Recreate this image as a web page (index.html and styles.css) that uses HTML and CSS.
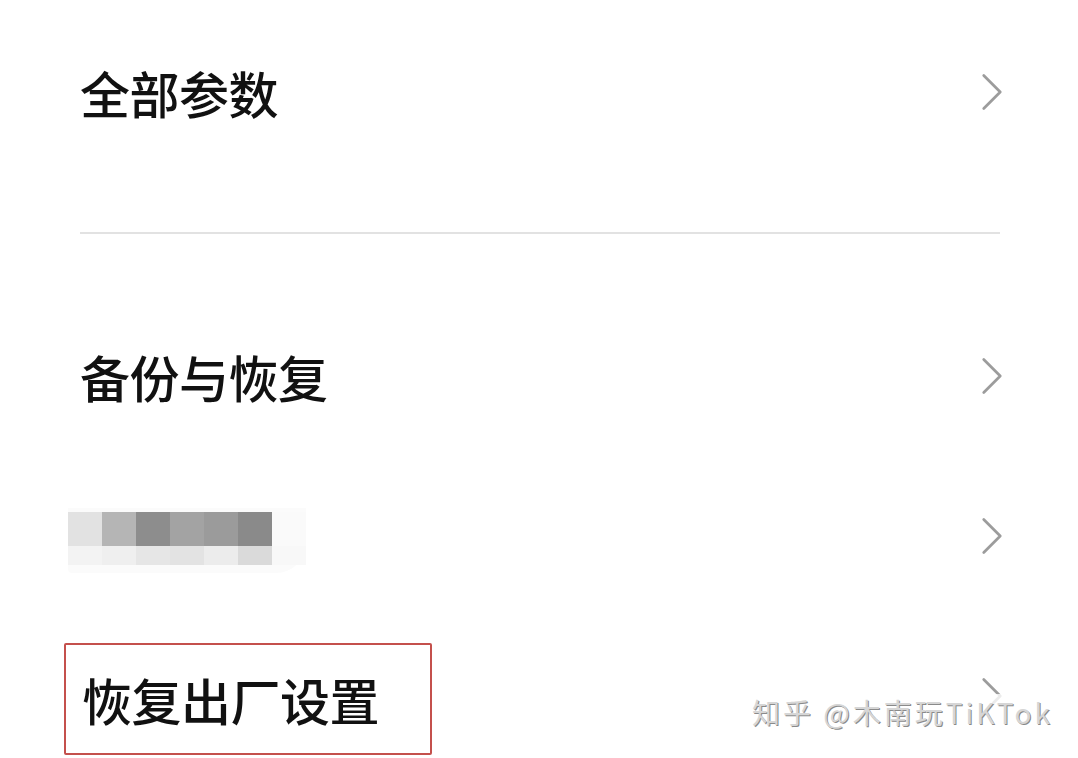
FILE: index.html
```html
<!DOCTYPE html>
<html lang="zh-CN">
<head>
  <meta charset="UTF-8" />
  <meta name="viewport" content="width=device-width, initial-scale=1.0" />
  <title>设置</title>
  <link rel="stylesheet" href="styles.css">
</head>
<body>
  <div class="settings">
    <div class="row row-top">
      <span class="label">全部参数</span>
      <svg class="chevron" viewBox="0 0 24 40"><polyline points="3,2 21,20 3,38" /></svg>
    </div>

    <div class="divider"></div>

    <div class="row">
      <span class="label">备份与恢复</span>
      <svg class="chevron" viewBox="0 0 24 40"><polyline points="3,2 21,20 3,38" /></svg>
    </div>

    <div class="row">
      <div class="blurred">
        <div class="px-row">
          <span class="px" style="background:#e2e2e2"></span>
          <span class="px" style="background:#b5b5b5"></span>
          <span class="px" style="background:#8d8d8d"></span>
          <span class="px" style="background:#a3a3a3"></span>
          <span class="px" style="background:#9b9b9b"></span>
          <span class="px" style="background:#8a8a8a"></span>
          <span class="px" style="background:#fafafa"></span>
        </div>
        <div class="px-row px-row-low">
          <span class="px" style="background:#f3f3f3"></span>
          <span class="px" style="background:#efefef"></span>
          <span class="px" style="background:#e6e6e6"></span>
          <span class="px" style="background:#e3e3e3"></span>
          <span class="px" style="background:#ececec"></span>
          <span class="px" style="background:#dadada"></span>
          <span class="px" style="background:#f8f8f8"></span>
        </div>
      </div>
      <svg class="chevron" viewBox="0 0 24 40"><polyline points="3,2 21,20 3,38" /></svg>
    </div>

    <div class="row">
      <div class="highlight">
        <span class="label">恢复出厂设置</span>
      </div>
      <svg class="chevron" viewBox="0 0 24 40"><polyline points="3,2 21,20 3,38" /></svg>
    </div>
  </div>

  <div class="watermark">知乎 @木南玩TiKTok</div>
</body>
</html>
```

FILE: styles.css
```css
body {
  margin: 0;
  background: #ffffff;
  font-family: "Noto Sans CJK SC", "Noto Sans", sans-serif;
  color: #111;
  overflow: hidden;
}

.settings {
  padding: 12px 75px 0 80px;
}

.row {
  display: flex;
  align-items: center;
  justify-content: space-between;
  height: 160px;
}

.label {
  font-size: 50px;
  font-weight: 500;
  line-height: 1;
  letter-spacing: -0.5px;
}

.chevron {
  width: 22px;
  height: 40px;
  fill: none;
  stroke: #9c9c9c;
  stroke-width: 3;
  stroke-linecap: round;
  stroke-linejoin: round;
}

.divider {
  height: 2px;
  background: #e2e2e2;
  margin: 60px 3px 62px 0;
}

.blurred {
  margin-left: -12px;
  margin-top: 8px;
  display: flex;
  flex-direction: column;
  background: #fbfbfb;
  padding: 4px 0 8px;
  border-radius: 0 0 30px 4px;
}

.px-row {
  display: flex;
}

.px {
  width: 34px;
  height: 34px;
}

.px-row-low .px {
  height: 19px;
}

.highlight {
  margin-left: -16px;
  margin-top: 6px;
  width: 368px;
  height: 112px;
  border: 2px solid #c4504c;
  border-radius: 2px;
  box-sizing: border-box;
  display: flex;
  align-items: center;
  padding-left: 16px;
}

.watermark {
  position: absolute;
  left: 748px;
  top: 694px;
  padding: 0 4px;
  font-size: 28px;
  line-height: 36px;
  letter-spacing: 3px;
  color: #d6d6d6;
  background: rgba(255, 255, 255, 0.8);
  text-shadow: 1px 1px 0 #8a8a8a, -1px -1px 0 #ffffff;
}
```
